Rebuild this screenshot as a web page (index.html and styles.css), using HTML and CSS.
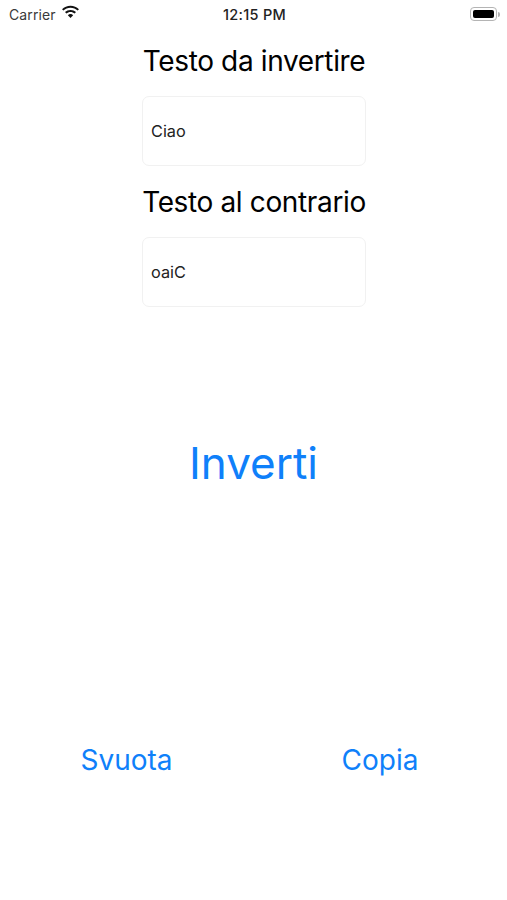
FILE: index.html
```html
<!DOCTYPE html>
<html lang="en">

<head>
    <meta charset="UTF-8">
    <title>Inverti</title>
    <link rel="stylesheet" href="styles.css">
</head>

<body>
    <div class="status-bar">
        <div class="status-left">
            <span class="carrier">Carrier</span>
            <svg class="wifi" width="19" height="14" viewBox="0 0 18 13">
                <path d="M9 2.400c2.600 0 5 1 6.800 2.700l1.200-1.300C14.900 1.700 12.100.5 9 .5S3.100 1.700 1 3.800l1.200 1.300C4 3.400 6.400 2.400 9 2.400z" />
                <path d="M9 6.400c1.500 0 2.900.6 3.900 1.500l1.300-1.300C12.800 5.300 11 4.500 9 4.500s-3.800.8-5.200 2.100l1.300 1.300c1-.9 2.400-1.500 3.900-1.500z" />
                <path d="M9 8.500c-1 0-1.800.4-2.500 1L9 12.300l2.500-2.800c-.7-.6-1.500-1-2.500-1z" />
            </svg>
        </div>
        <span class="clock">12:15 PM</span>
        <div class="battery">
            <div class="battery-body">
                <div class="battery-fill"></div>
            </div>
            <div class="battery-cap"></div>
        </div>
    </div>

    <div class="form">
        <label class="field-label">Testo da invertire</label>
        <div class="field">Ciao</div>
        <label class="field-label second">Testo al contrario</label>
        <div class="field">oaiC</div>
    </div>

    <div class="main-action">
        <button class="btn btn-big">Inverti</button>
    </div>

    <div class="bottom-actions">
        <button class="btn btn-small">Svuota</button>
        <button class="btn btn-small">Copia</button>
    </div>
</body>

</html>
```

FILE: styles.css
```css
* {
    box-sizing: border-box;
}

body {
    margin: 0;
    height: 900px;
    background: #fff;
    color: #000;
    font-family: "Inter", "Liberation Sans", sans-serif;
    overflow: hidden;
}

.status-bar {
    height: 28px;
    padding: 0 7px 0 9px;
    display: grid;
    grid-template-columns: 1fr auto 1fr;
    align-items: center;
}

.status-left {
    display: flex;
    align-items: center;
    gap: 5px;
}

.carrier {
    font-size: 14px;
    letter-spacing: 0.1px;
    color: #3a3a3a;
}

.wifi {
    fill: #111;
    margin-top: -5px;
}

.clock {
    font-size: 14.500px;
    font-weight: 500;
    letter-spacing: 0.3px;
    color: #222;
}

.battery {
    justify-self: end;
    display: flex;
    align-items: center;
    gap: 1px;
}

.battery-body {
    width: 27px;
    height: 14px;
    padding: 2px;
    border: 1px solid #b4b4b4;
    border-radius: 4px;
}

.battery-fill {
    height: 100%;
    background: #000;
    border-radius: 2px;
}

.battery-cap {
    width: 2px;
    height: 5px;
    background: #b4b4b4;
    border-radius: 0 2px 2px 0;
}

.form {
    width: 224px;
    margin: 15px 0 0 142px;
    display: flex;
    flex-direction: column;
}

.field-label {
    font-size: 28px;
    line-height: 36px;
    letter-spacing: -0.36px;
    text-align: center;
    white-space: nowrap;
}

.field-label.second {
    margin-top: 18px;
}

.field {
    height: 70px;
    margin-top: 17px;
    padding-left: 8px;
    display: flex;
    align-items: center;
    font-size: 16.300px;
    color: #222;
    border: 1px solid #f1f1f1;
    border-radius: 7px;
}

.btn {
    padding: 0;
    border: 0;
    background: none;
    color: #0f80fa;
    font-family: inherit;
}

.main-action {
    margin-top: 128px;
    text-align: center;
}

.btn-big {
    font-size: 44px;
    line-height: 56px;
}

.bottom-actions {
    margin-top: 251px;
    display: grid;
    grid-template-columns: 253px 254px;
    justify-items: center;
}

.btn-small {
    font-size: 28px;
    line-height: 36px;
}
```
